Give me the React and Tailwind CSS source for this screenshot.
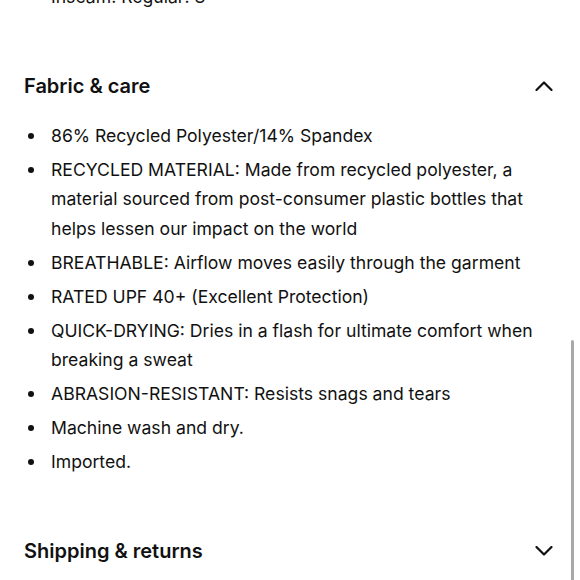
import React from "react";

const items = [
  "86% Recycled Polyester/14% Spandex",
  "RECYCLED MATERIAL: Made from recycled polyester, a material sourced from post-consumer plastic bottles that helps lessen our impact on the world",
  "BREATHABLE: Airflow moves easily through the garment",
  "RATED UPF 40+ (Excellent Protection)",
  "QUICK-DRYING: Dries in a flash for ultimate comfort when breaking a sweat",
  "ABRASION-RESISTANT: Resists snags and tears",
  "Machine wash and dry.",
  "Imported.",
];

function Bullet({ children }) {
  return (
    <li className="flex">
      <span className="w-[27px] shrink-0 flex justify-start pl-[4px]">
        <span className="mt-[12px] w-[6px] h-[6px] rounded-full bg-[#111]"></span>
      </span>
      <span className="flex-1">{children}</span>
    </li>
  );
}

function Chevron({ up }) {
  return (
    <svg width="18" height="10" viewBox="0 0 18 10" fill="none">
      <path
        d={up ? "M1.5 9 L9 1.5 L16.5 9" : "M1.5 1 L9 8.5 L16.5 1"}
        stroke="#111"
        strokeWidth="2.2"
        strokeLinecap="round"
        strokeLinejoin="round"
      />
    </svg>
  );
}

export default function App() {
  return (
    <div
      className="relative w-[580px] h-[580px] overflow-hidden bg-white text-[#111]"
      style={{ fontFamily: "Inter, 'Noto Sans', sans-serif" }}
    >
      <div className="mt-[-18px] pl-6 pr-[34px]">
        <ul className="text-[17.6px] leading-[29.5px]">
          <Bullet>Inseam: Regular: 8"</Bullet>
        </ul>
        <div className="mt-[60px] h-[28px] flex items-center justify-between">
          <h2 className="text-[20px] font-semibold leading-[28px]">Fabric &amp; care</h2>
          <span className="mr-[-7px]">
            <Chevron up />
          </span>
        </div>
        <ul className="mt-[21px] flex flex-col gap-[4.5px] text-[17.6px] leading-[29.5px]">
          {items.map((t) => (
            <Bullet key={t}>{t}</Bullet>
          ))}
        </ul>
        <div className="mt-[60px] h-[28px] flex items-center justify-between">
          <h2 className="text-[20px] font-semibold leading-[28px]">Shipping &amp; returns</h2>
          <span className="mr-[-7px]">
            <Chevron />
          </span>
        </div>
      </div>
      <div className="absolute right-[6px] top-[340px] w-[3px] h-[260px] rounded-full bg-[#a9a9a9]"></div>
    </div>
  );
}
